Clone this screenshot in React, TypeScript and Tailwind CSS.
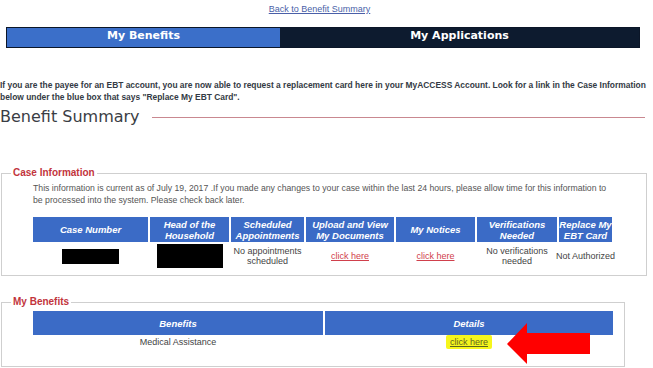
import React from "react";

const hdr = "bg-[#3b6bc6] text-white font-bold italic text-[9.5px] leading-[11px] flex items-center justify-center text-center";
const cell = "flex items-center justify-center text-center text-[9px] leading-[10px] text-[#444]";

export default function App() {
  return (
    <div className="relative w-[653px] h-[368px] overflow-hidden bg-white" style={{ fontFamily: '"Liberation Sans", Arial, sans-serif' }}>
      <div className="pt-[4px] pr-[14px] text-center text-[9px] leading-[11px]">
        <a className="underline text-[#4a5fa8]" href="#">Back to Benefit Summary</a>
      </div>

      <div className="mt-[12px] ml-[6px] w-[634px] h-[21px] flex border border-[#0b1628]" style={{ fontFamily: '"DejaVu Sans", Verdana, sans-serif' }}>
        <div className="w-[273px] bg-[#3b6fc9] text-white font-bold text-[11px] flex items-center justify-center pb-[3px]">My Benefits</div>
        <div className="flex-1 bg-[#0d1b2f] text-white font-bold text-[11px] flex items-center justify-center pb-[3px]">My Applications</div>
      </div>

      <p className="mt-[31px] w-[740px] origin-left scale-x-[0.885] text-[9.5px] leading-[12px] font-bold text-[#333a44] whitespace-nowrap">
        If you are the payee for an EBT account, you are now able to request a replacement card here in your MyACCESS Account. Look for a link in the Case Information
        <br />
        below under the blue box that says "Replace My EBT Card".
      </p>

      <div className="mt-[4px] flex items-center">
        <span className="text-[16px] leading-[20px] text-[#3a3d44]" style={{ fontFamily: '"DejaVu Sans", sans-serif' }}>Benefit Summary</span>
        <div className="ml-[12px] mr-[8px] flex-1 h-px bg-[#c98890]" />
      </div>

      <fieldset className="mt-[40px] ml-[1px] w-[646px] border border-[#cfcfcf] pl-[9px] pb-[5px]">
        <legend className="px-[2px] text-[10px] leading-[12px] font-bold text-[#c2343c]">Case Information</legend>
        <div className="ml-[22px]">
          <p className="mt-[3px] text-[8.7px] leading-[12px] text-[#555] whitespace-nowrap">
            This information is current as of July 19, 2017 .If you made any changes to your case within the last 24 hours, please allow time for this information to
            <br />
            be processed into the system. Please check back later.
          </p>
          <div className="mt-[11px] grid grid-cols-[115px_79px_73px_88px_79px_80px_53px] gap-x-[2px]">
            <div className={`${hdr} h-[25px]`}>Case Number</div>
            <div className={hdr}>Head of the<br />Household</div>
            <div className={hdr}>Scheduled<br />Appointments</div>
            <div className={hdr}>Upload and View<br />My Documents</div>
            <div className={hdr}>My Notices</div>
            <div className={hdr}>Verifications<br />Needed</div>
            <div className={`${hdr} whitespace-nowrap`}>Replace My<br />EBT Card</div>

            <div className={`${cell} h-[28px]`}><div className="w-[57px] h-[15px] bg-black" /></div>
            <div className={cell}><div className="w-[66px] h-[24px] bg-black" /></div>
            <div className={`${cell} whitespace-nowrap`}>No appointments<br />scheduled</div>
            <div className={cell}><a href="#" className="text-[#d0404c] underline">click here</a></div>
            <div className={cell}><a href="#" className="text-[#d0404c] underline">click here</a></div>
            <div className={`${cell} whitespace-nowrap`}>No verifications<br />needed</div>
            <div className={`${cell} whitespace-nowrap`}>Not Authorized</div>
          </div>
        </div>
      </fieldset>

      <fieldset className="mt-[20px] ml-[1px] w-[624px] border border-[#cfcfcf] pl-[9px] pb-[17px]">
        <legend className="px-[2px] text-[10px] leading-[12px] font-bold text-[#c2343c]">My Benefits</legend>
        <div className="ml-[22px] mt-[3px] grid grid-cols-[290px_288px] gap-x-[2px]">
          <div className={`${hdr} h-[24px]`}>Benefits</div>
          <div className={hdr}>Details</div>
          <div className={`${cell} h-[14px]`}>Medical Assistance</div>
          <div className={cell}>
            <span className="bg-[#f6f61c] px-[4px] py-[2px] rounded-[2px]">
              <a href="#" className="text-[#5e6420] underline">click here</a>
            </span>
          </div>
        </div>
      </fieldset>

      <svg className="absolute left-0 top-0" width="653" height="368" viewBox="0 0 653 368">
        <polygon points="507,344 527,323 527,333 590,333 590,354 527,354 527,364" fill="#ff0000" />
      </svg>
    </div>
  );
}
